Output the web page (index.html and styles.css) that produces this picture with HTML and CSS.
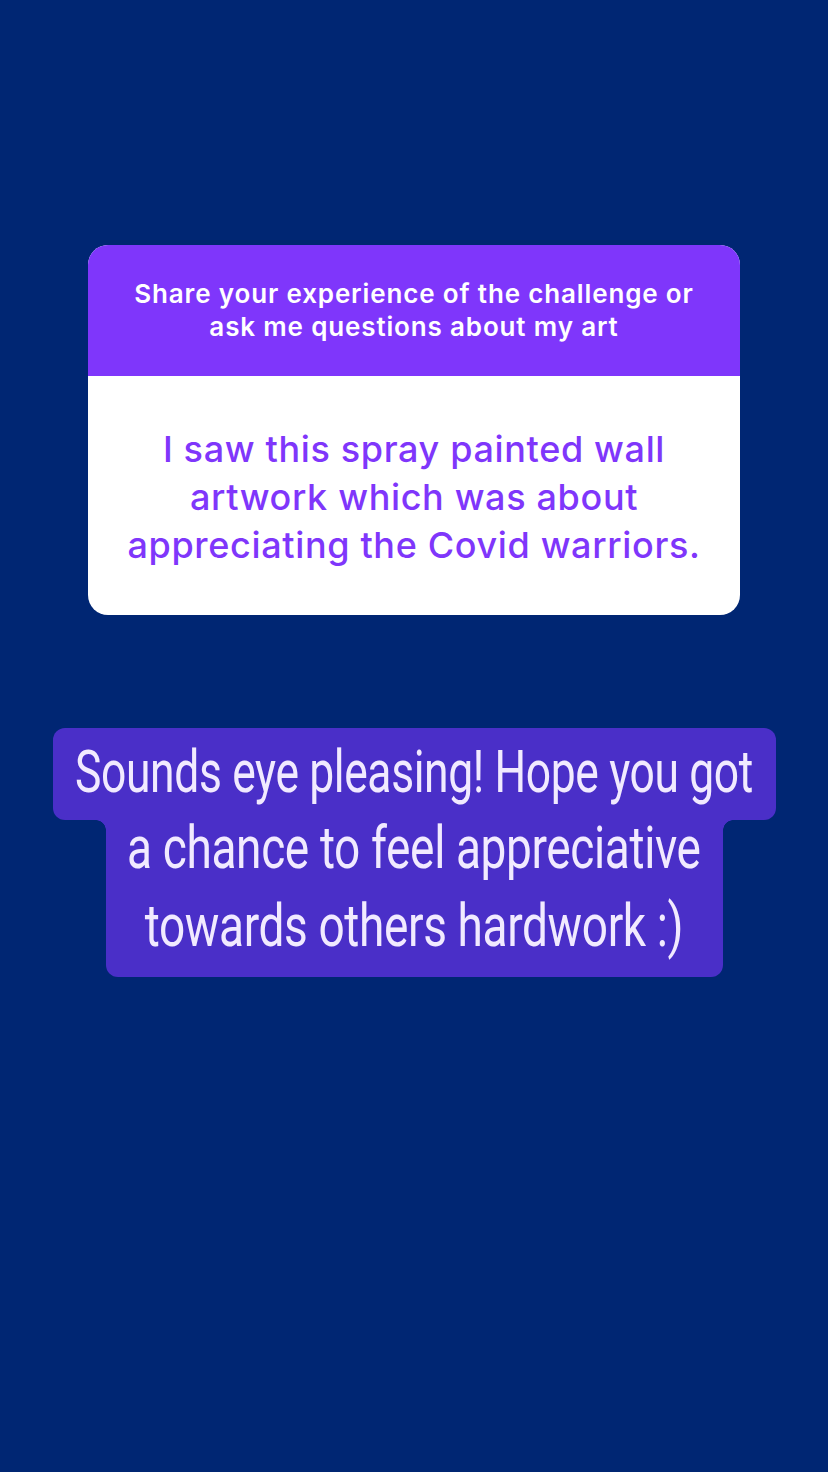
FILE: index.html
```html
<!DOCTYPE html>
<html>
<head>
<meta charset="utf-8">
<link rel="stylesheet" href="styles.css">
</head>
<body>
<main class="screen">
  <section class="card">
    <header class="card-head">Share your experience of the challenge or<br>ask me questions about my art</header>
    <div class="card-body">I saw this spray painted wall<br>artwork which was about<br>appreciating the Covid warriors.</div>
  </section>
  <div class="reply">
    <div class="reply-line first"><span class="narrow">Sounds eye pleasing! Hope you got</span></div>
    <div class="reply-line rest"><span class="narrow">a chance to feel appreciative</span><span class="narrow">towards others hardwork :)</span></div>
  </div>
</main>
</body>
</html>
```
FILE: styles.css
```css
html, body {
  margin: 0;
  padding: 0;
  background: #002673;
}
.screen {
  width: 828px;
  height: 1472px;
  display: flex;
  flex-direction: column;
  align-items: center;
  padding-top: 245px;
  box-sizing: border-box;
}
.card {
  width: 652px;
  border-radius: 20px;
  overflow: hidden;
  background: #ffffff;
  font-family: Inter, "Noto Sans", sans-serif;
  text-align: center;
}
.card-head {
  background: #7f36fb;
  color: #ffffff;
  height: 131px;
  box-sizing: border-box;
  padding: 32px 20px 0;
  font-size: 26px;
  font-weight: 600;
  line-height: 33px;
  letter-spacing: 0.85px;
}
.card-body {
  height: 239px;
  box-sizing: border-box;
  padding: 49px 20px 0;
  color: #7f36fb;
  font-size: 36px;
  font-weight: 500;
  line-height: 48px;
  letter-spacing: 0.65px;
}
.reply {
  margin-top: 113px;
  display: flex;
  flex-direction: column;
  align-items: center;
  font-family: Roboto, "Noto Sans", sans-serif;
  color: #f1eaff;
  font-size: 60px;
  line-height: 77px;
  text-align: center;
}
.reply-line {
  background: #4a2fc8;
  box-sizing: border-box;
  display: flex;
  flex-direction: column;
  align-items: center;
}
.narrow {
  display: block;
  white-space: nowrap;
  transform: scaleX(0.767);
  letter-spacing: -0.5px;
}
.reply-line.first .narrow {
  transform: scaleX(0.74);
}
.reply-line.first {
  width: 723px;
  height: 92px;
  padding-top: 5px;
  border-radius: 12px;
}
.reply-line.rest {
  position: relative;
  width: 617px;
  height: 157px;
  line-height: 78px;
  border-radius: 0 0 12px 12px;
}
.reply-line.rest .narrow:first-child {
  margin-top: -11px;
}
.reply-line.rest::before,
.reply-line.rest::after {
  content: "";
  position: absolute;
  top: 0;
  width: 10px;
  height: 10px;
}
.reply-line.rest::before {
  left: -10px;
  background: radial-gradient(circle at 0 100%, transparent 9.5px, #4a2fc8 10px);
}
.reply-line.rest::after {
  right: -10px;
  background: radial-gradient(circle at 100% 100%, transparent 9.5px, #4a2fc8 10px);
}
```
